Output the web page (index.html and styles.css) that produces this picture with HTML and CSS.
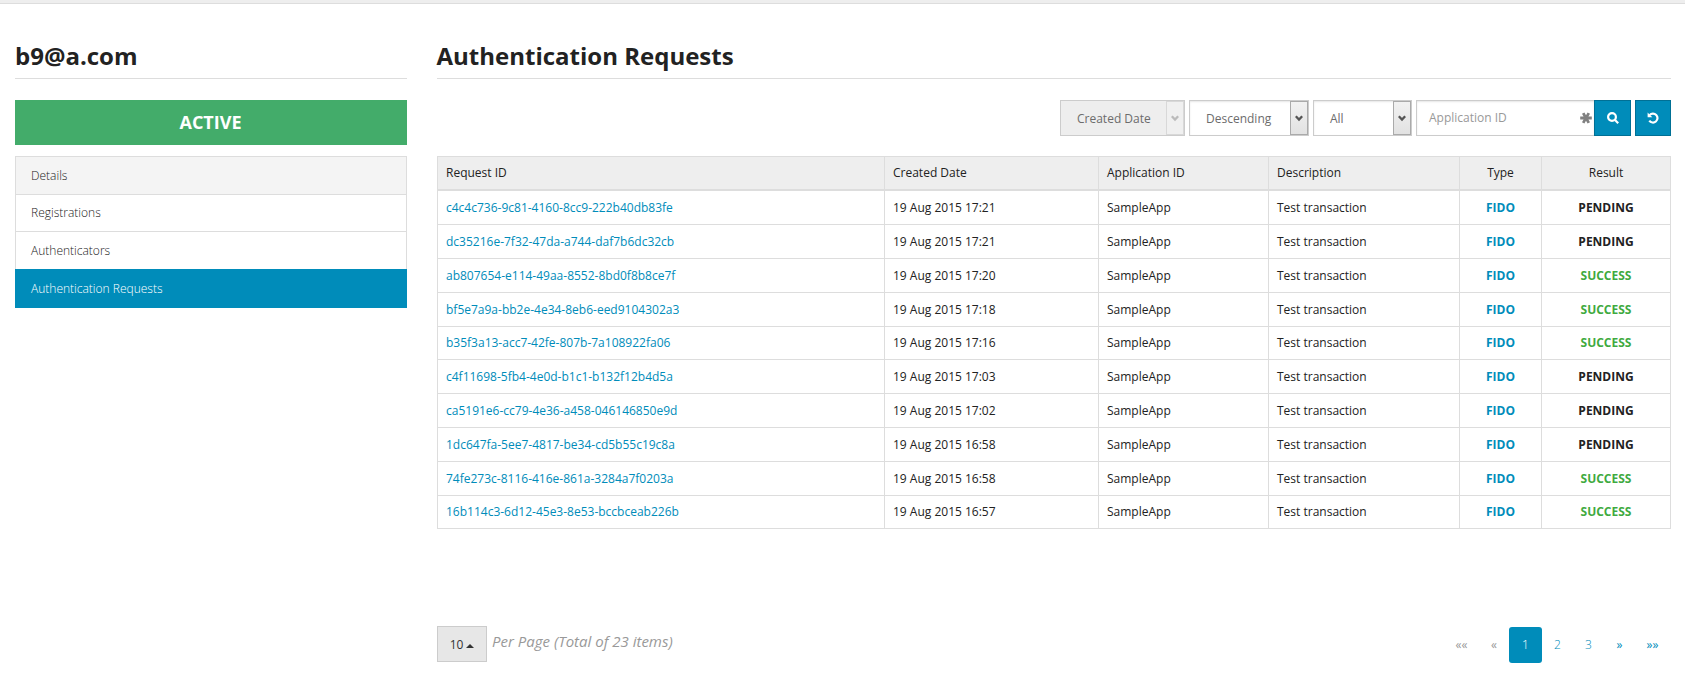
FILE: index.html
```html
<!DOCTYPE html>
<html lang="en">
<head>
<meta charset="utf-8">
<title>Authentication Requests</title>
<link rel="stylesheet" href="styles.css">
</head>
<body>
<div class="topbar"></div>
<div class="page">
  <aside class="sidebar">
    <h1 class="title">b9@a.com</h1>
    <div class="status">ACTIVE</div>
    <nav class="menu">
      <a class="menu-item hover">Details</a>
      <a class="menu-item short">Registrations</a>
      <a class="menu-item">Authenticators</a>
      <a class="menu-item current">Authentication Requests</a>
    </nav>
  </aside>
  <main class="main">
    <h1 class="title">Authentication Requests</h1>
    <div class="filters">
      <div class="select disabled s-date"><span>Created Date</span><i class="arrow"><svg width="8" height="7" viewBox="0 0 8 7"><path d="M0.8 1.2L4 4.6L7.2 1.2"/></svg></i></div>
      <div class="select s-order"><span>Descending</span><i class="arrow"><svg width="8" height="7" viewBox="0 0 8 7"><path d="M0.8 1.2L4 4.6L7.2 1.2"/></svg></i></div>
      <div class="select s-all"><span>All</span><i class="arrow"><svg width="8" height="7" viewBox="0 0 8 7"><path d="M0.8 1.2L4 4.6L7.2 1.2"/></svg></i></div>
      <div class="search">
        <div class="field"><span>Application ID</span><svg class="star" width="12" height="12" viewBox="0 0 12 12"><path d="M0.2 6H11.8M3.2 1.1L8.8 10.9M8.8 1.1L3.2 10.9"/></svg></div>
        <div class="btn"><svg width="12" height="12" viewBox="0 0 12 12"><circle cx="5" cy="5" r="3.9"/><path d="M7.8 7.8L11.2 11.2"/></svg></div>
      </div>
      <div class="btn reset"><svg width="12" height="12" viewBox="0 0 12 12"><path d="M2.6 3.1A4.5 4.5 0 1 1 2.3 8.6"/><path class="solid" d="M0.6 0.6V5.3H5.3Z"/></svg></div>
    </div>
    <table class="grid">
      <colgroup><col class="c1"><col class="c2"><col class="c3"><col class="c4"><col class="c5"><col class="c6"></colgroup>
      <thead><tr><th>Request ID</th><th>Created Date</th><th>Application ID</th><th>Description</th><th class="mid">Type</th><th class="mid">Result</th></tr></thead>
      <tbody>
        <tr><td class="id">c4c4c736-9c81-4160-8cc9-222b40db83fe</td><td>19 Aug 2015 17:21</td><td>SampleApp</td><td>Test transaction</td><td class="type">FIDO</td><td class="result">PENDING</td></tr>
        <tr><td class="id">dc35216e-7f32-47da-a744-daf7b6dc32cb</td><td>19 Aug 2015 17:21</td><td>SampleApp</td><td>Test transaction</td><td class="type">FIDO</td><td class="result">PENDING</td></tr>
        <tr><td class="id">ab807654-e114-49aa-8552-8bd0f8b8ce7f</td><td>19 Aug 2015 17:20</td><td>SampleApp</td><td>Test transaction</td><td class="type">FIDO</td><td class="result ok">SUCCESS</td></tr>
        <tr><td class="id">bf5e7a9a-bb2e-4e34-8eb6-eed9104302a3</td><td>19 Aug 2015 17:18</td><td>SampleApp</td><td>Test transaction</td><td class="type">FIDO</td><td class="result ok">SUCCESS</td></tr>
        <tr><td class="id">b35f3a13-acc7-42fe-807b-7a108922fa06</td><td>19 Aug 2015 17:16</td><td>SampleApp</td><td>Test transaction</td><td class="type">FIDO</td><td class="result ok">SUCCESS</td></tr>
        <tr><td class="id">c4f11698-5fb4-4e0d-b1c1-b132f12b4d5a</td><td>19 Aug 2015 17:03</td><td>SampleApp</td><td>Test transaction</td><td class="type">FIDO</td><td class="result">PENDING</td></tr>
        <tr><td class="id">ca5191e6-cc79-4e36-a458-046146850e9d</td><td>19 Aug 2015 17:02</td><td>SampleApp</td><td>Test transaction</td><td class="type">FIDO</td><td class="result">PENDING</td></tr>
        <tr><td class="id">1dc647fa-5ee7-4817-be34-cd5b55c19c8a</td><td>19 Aug 2015 16:58</td><td>SampleApp</td><td>Test transaction</td><td class="type">FIDO</td><td class="result">PENDING</td></tr>
        <tr><td class="id">74fe273c-8116-416e-861a-3284a7f0203a</td><td>19 Aug 2015 16:58</td><td>SampleApp</td><td>Test transaction</td><td class="type">FIDO</td><td class="result ok">SUCCESS</td></tr>
        <tr><td class="id">16b114c3-6d12-45e3-8e53-bccbceab226b</td><td>19 Aug 2015 16:57</td><td>SampleApp</td><td>Test transaction</td><td class="type">FIDO</td><td class="result ok">SUCCESS</td></tr>
      </tbody>
    </table>
    <footer class="footer">
      <div class="per-page"><div class="size">10<i class="caret"></i></div><em>Per Page (Total of 23 items)</em></div>
      <nav class="pager">
        <a class="off dbl">««</a><a class="off">«</a><a class="on">1</a><a>2</a><a>3</a><a class="sym">»</a><a class="sym dbl">»»</a>
      </nav>
    </footer>
  </main>
</div>
</body>
</html>
```
FILE: styles.css
```css
* { box-sizing: border-box; }
body { margin: 0; background: #fff; color: #222; font-family: "Open Sans", sans-serif; font-size: 12px; }
.topbar { height: 4px; background: #eee; border-bottom: 1px solid #ddd; }
.page { display: flex; gap: 30px; padding: 0 14px 0 15px; }
.sidebar { width: 392px; }
.main { width: 1234px; }
.title { margin: 0 0 21px; height: 75px; padding-top: 35px; border-bottom: 1px solid #ddd; font-size: 24px; line-height: 34px; font-weight: 700; white-space: nowrap; }
.main .title { text-indent: -0.5px; }
.status { height: 45px; margin-bottom: 11px; background: #43ac6a; color: #fff; font-size: 18px; font-weight: 700; line-height: 45px; text-align: center; text-indent: -1px; }
.menu { display: flex; flex-direction: column; border-top: 1px solid #ddd; }
.menu-item { height: 38px; padding-left: 15px; border: 1px solid #ddd; border-top: 0; line-height: 37px; font-weight: 300; color: #222; }
.menu-item.hover { background: #f4f4f4; }
.menu-item.short { height: 37px; line-height: 35px; }
.menu-item.current { height: 39px; margin-top: -1px; line-height: 39px; background: #008cba; border-color: #008cba; color: #fff; }
.filters { display: flex; justify-content: flex-end; gap: 4px; height: 36px; margin-bottom: 20px; }
.select { display: flex; justify-content: space-between; border: 1px solid #ccc; padding-left: 16px; line-height: 35px; color: #6c6c6c; box-shadow: inset 0 1px 2px rgba(0,0,0,.1); }
.s-date { width: 125px; }
.s-order { width: 120px; }
.s-all { width: 99px; }
.arrow { width: 18px; height: 34px; border: 1px solid #aaa; background: linear-gradient(#f2f2f2, #e2e2e2); display: flex; align-items: center; justify-content: center; }
.arrow path { fill: none; stroke: #555; stroke-width: 2.3; }
.disabled { background: #eee; box-shadow: none; }
.disabled .arrow { background: #f0f0f0; border-color: #d8d8d8; }
.disabled .arrow path { stroke: #bbb; }
.search { display: flex; }
.field { width: 178px; display: flex; align-items: center; justify-content: space-between; border: 1px solid #ccc; border-right: 0; padding: 0 2px 0 12px; color: #999; box-shadow: inset 0 1px 2px rgba(0,0,0,.1); }
.field span { margin-top: -1px; }
.star path { stroke: #808080; stroke-width: 2.8; }
.btn { width: 37px; height: 36px; display: flex; align-items: center; justify-content: center; background: #008cba; border: 1px solid #007095; }
.btn.reset { width: 36px; }
.btn svg { fill: none; stroke: #fff; stroke-width: 2.2; }
.btn .solid { fill: #fff; stroke: none; }
.grid { width: 1234px; table-layout: fixed; border-collapse: separate; border-spacing: 0; border: 1px solid #ddd; border-width: 1px 0 0 1px; }
.c1 { width: 447px; }
.c2 { width: 214px; }
.c3 { width: 170px; }
.c4 { width: 191px; }
.c5 { width: 82px; }
.c6 { width: 129px; }
th, td { height: 34px; padding: 0 8px; border: 1px solid #ddd; border-width: 0 1px 1px 0; line-height: 20px; text-align: left; white-space: nowrap; }
tbody tr:nth-child(5n) td { height: 33px; }
th { background: #eee; border-bottom-width: 2px; font-weight: 400; }
.id, .type { color: #008cba; }
.mid, .type, .result { text-align: center; }
.type, .result { font-weight: 700; }
.ok { color: #3faa3f; }
.footer { display: flex; justify-content: space-between; margin-top: 97px; }
.per-page { display: flex; gap: 5px; }
.per-page em { font-size: 15px; line-height: 30px; color: #999; }
.size { width: 50px; height: 36px; display: flex; align-items: center; justify-content: center; gap: 3px; background: #e7e7e7; border: 1px solid #ccc; color: #333; }
.caret { border: 4px solid transparent; border-top: 0; border-bottom-color: #333; margin-top: 3px; }
.pager { display: flex; margin-top: 1px; padding-right: 1px; font-weight: 300; }
.pager a { width: 31px; height: 36px; line-height: 35px; text-align: center; color: #008cba; border-radius: 3px; }
.pager .on { width: 33px; background: #008cba; color: #fff; }
.pager .off { width: 30px; color: #999; }
.pager .dbl { width: 35px; }
.pager .off, .pager .sym { font-weight: 400; }
```
